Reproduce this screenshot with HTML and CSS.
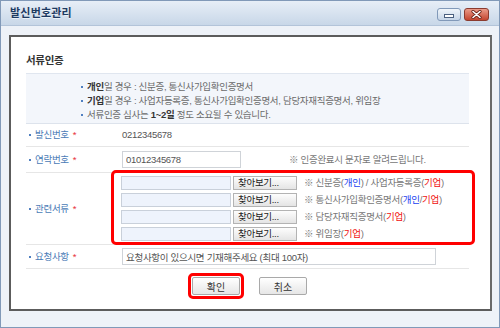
FILE: index.html
```html
<!DOCTYPE html>
<html lang="ko">
<head>
    <meta charset="UTF-8">
    <title>발신번호관리</title>
    <link rel="stylesheet" href="styles.css">
</head>
<body>
    <div class="window">
        <div class="titlebar">
            <span class="title">발신번호관리</span>
            <div class="controls">
                <span class="ctl min"><i></i></span>
                <span class="ctl close">
                    <svg width="11" height="9" viewBox="0 0 11 9">
                        <path d="M2 1.5 L9 7.5 M9 1.5 L2 7.5" stroke="#6b2418" stroke-width="3.2" stroke-linecap="round"/>
                        <path d="M2 1.5 L9 7.5 M9 1.5 L2 7.5" stroke="#fff" stroke-width="1.6" stroke-linecap="round"/>
                    </svg>
                </span>
            </div>
        </div>

        <div class="content">
            <div class="panel">
                <h2>서류인증</h2>

                <ul class="guide">
                    <li><b>개인</b>일 경우 : 신분증, 통신사가입확인증명서</li>
                    <li><b>기업</b>일 경우 : 사업자등록증, 통신사가입확인증명서, 담당자재직증명서, 위임장</li>
                    <li>서류인증 심사는 <b>1~2일</b> 정도 소요될 수 있습니다.</li>
                </ul>

                <div class="form">
                    <div class="row">
                        <div class="label">발신번호<em>*</em></div>
                        <div class="value">0212345678</div>
                    </div>
                    <div class="row">
                        <div class="label">연락번호<em>*</em></div>
                        <div class="value phone">
                            <input type="text" class="field phone-field" value="01012345678">
                            <span class="note">※ 인증완료시 문자로 알려드립니다.</span>
                        </div>
                    </div>
                    <div class="row docs-row">
                        <div class="label">관련서류<em>*</em></div>
                        <div class="docs">
                            <div class="doc">
                                <input type="text" class="field file-field" readonly>
                                <button type="button" class="browse">찾아보기...</button>
                                <span class="note">※ 신분증(<span class="p">개인</span>) / 사업자등록증(<span class="c">기업</span>)</span>
                            </div>
                            <div class="doc">
                                <input type="text" class="field file-field" readonly>
                                <button type="button" class="browse">찾아보기...</button>
                                <span class="note">※ 통신사가입확인증명서(<span class="p">개인</span>/<span class="c">기업</span>)</span>
                            </div>
                            <div class="doc">
                                <input type="text" class="field file-field" readonly>
                                <button type="button" class="browse">찾아보기...</button>
                                <span class="note">※ 담당자재직증명서(<span class="c">기업</span>)</span>
                            </div>
                            <div class="doc">
                                <input type="text" class="field file-field" readonly>
                                <button type="button" class="browse">찾아보기...</button>
                                <span class="note">※ 위임장(<span class="c">기업</span>)</span>
                            </div>
                        </div>
                    </div>
                    <div class="row">
                        <div class="label">요청사항<em>*</em></div>
                        <div class="value">
                            <input type="text" class="field memo-field" value="요청사항이 있으시면 기재해주세요 (최대 100자)">
                        </div>
                    </div>
                </div>

                <div class="actions">
                    <span class="mark"><button type="button" class="btn">확인</button></span>
                    <button type="button" class="btn">취소</button>
                </div>
            </div>
        </div>
    </div>
</body>
</html>
```

FILE: styles.css
```css
body {
    margin: 0;
    font-family: "Liberation Sans", "Noto Sans CJK KR", sans-serif;
    font-size: 9.5px;
    letter-spacing: -0.3px;
    line-height: 14px;
    color: #6a6a6a;
}
.window {
    width: 500px;
    height: 328px;
    box-sizing: border-box;
    border: 1px solid #8199b8;
    background-color: #eef2f8;
}
.titlebar {
    height: 24px;
    display: flex;
    align-items: center;
    justify-content: space-between;
    padding: 0 10px 0 9px;
    border-bottom: 1px solid #b3c4d9;
    background: linear-gradient(#e7eef7, #c8d7e8);
}
.title {
    font-size: 11px;
    font-weight: bold;
    color: #1d3a62;
    letter-spacing: 0.2px;
    text-shadow: 0 1px 0 rgba(255,255,255,0.6);
}
.controls {
    display: flex;
    gap: 3px;
    margin-top: 3px;
}
.ctl {
    height: 13px;
    box-sizing: border-box;
    border-radius: 3px;
    display: flex;
    align-items: center;
    justify-content: center;
}
.ctl.min {
    width: 24px;
    border: 1px solid #8199b9;
    background: linear-gradient(#f0f5fa, #c6d5e7);
}
.ctl.min i {
    width: 8px;
    height: 2px;
    border: 1px solid #4b607f;
    background-color: #fff;
    margin-top: 2px;
}
.ctl.close {
    width: 25px;
    border: 1px solid #8b3b2f;
    background: linear-gradient(#eb9b89, #c4452f);
}
.content {
    padding: 9px 7px 0 8px;
}
.panel {
    height: 276px;
    box-sizing: border-box;
    border: 2px solid #5c5c5c;
    border-right-color: #6a6a6a;
    background-color: #fff;
    padding: 0 21px 0 15px;
}
h2 {
    margin: 0;
    padding: 16px 0 6px;
    font-size: 10.5px;
    line-height: 14px;
    color: #333;
    letter-spacing: -0.3px;
}
.guide {
    list-style: none;
    margin: 0;
    padding: 6px 0 1px 55px;
    background-color: #f3f6fb;
    border-top: 1px solid #e0e6ef;
    border-bottom: 1px solid #dde3ec;
}
.guide li::before,
.label::before {
    content: "";
    display: inline-block;
    width: 2px;
    height: 2px;
    background-color: #4f7fc0;
    vertical-align: middle;
    margin-right: 4px;
}
.guide b {
    color: #333;
}
.row {
    display: grid;
    grid-template-columns: 95px 1fr;
    align-items: center;
    min-height: 22px;
    border-bottom: 1px solid #e6e6e6;
}
.row:nth-child(2) {
    min-height: 25px;
}
.row:nth-child(4) {
    min-height: 23px;
}
.label {
    padding-left: 3px;
    color: #4a7bb6;
}
.label em {
    font-style: normal;
    color: #e8333a;
    margin-left: 4px;
}
.value {
    padding-left: 1px;
    color: #555;
}
.phone {
    display: flex;
    align-items: center;
    gap: 48px;
}
.field {
    box-sizing: border-box;
    height: 17px;
    margin: 0;
    padding: 0 3px;
    border: 1px solid #cfd3d8;
    font-family: inherit;
    font-size: 9.5px;
    letter-spacing: -0.3px;
    color: #555;
    background-color: #fff;
    outline: none;
}
.phone-field {
    width: 119px;
}
.memo-field {
    width: 314px;
}
.docs {
    margin: -3px -6px -1px -10px;
    border: 3px solid #f00;
    border-radius: 5px;
    padding: 3px 0 1px 7px;
    display: flex;
    flex-direction: column;
    gap: 3px;
}
.doc {
    display: flex;
    align-items: center;
    height: 14px;
}
.file-field {
    width: 110px;
    height: 14px;
    background-color: #eef3fc;
    border-color: #c9d0da;
}
.browse {
    width: 64px;
    height: 14px;
    margin: 0 7px 0 2px;
    padding: 0 0 0 4px;
    border: 1px solid #b3b3b3;
    background: linear-gradient(#fdfdfd, #e4e4e4);
    font-family: inherit;
    font-size: 9.5px;
    letter-spacing: -0.3px;
    line-height: 12px;
    color: #222;
    text-align: left;
}
.note {
    color: #777;
}
.note .p {
    color: #1b3ff0;
}
.note .c {
    color: #f01010;
}
.actions {
    display: flex;
    align-items: center;
    justify-content: center;
    gap: 15px;
    padding: 4px 0 0 0;
}
.mark {
    display: flex;
    border: 3px solid #f00;
    border-radius: 5px;
    padding: 1px;
}
.btn {
    width: 48px;
    height: 18px;
    margin: 0;
    padding: 0;
    border: 1px solid #a9a9a9;
    border-radius: 2px;
    background: linear-gradient(#ffffff, #e6e6e6);
    font-family: inherit;
    font-size: 10px;
    letter-spacing: 0;
    color: #333;
}
```
